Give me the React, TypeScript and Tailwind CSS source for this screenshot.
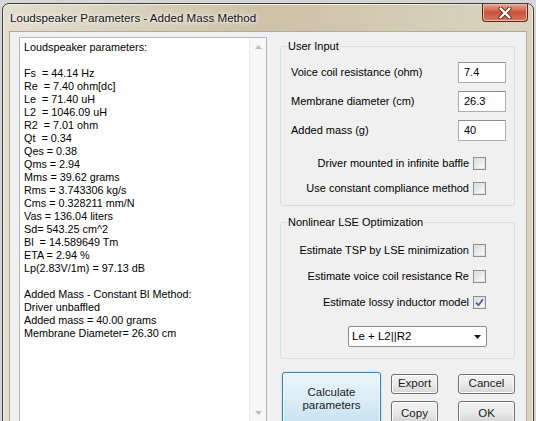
import React from "react";

const reportLines = [
  "Loudspeaker parameters:",
  "",
  "Fs  = 44.14 Hz",
  "Re  = 7.40 ohm[dc]",
  "Le  = 71.40 uH",
  "L2  = 1046.09 uH",
  "R2  = 7.01 ohm",
  "Qt  = 0.34",
  "Qes = 0.38",
  "Qms = 2.94",
  "Mms = 39.62 grams",
  "Rms = 3.743306 kg/s",
  "Cms = 0.328211 mm/N",
  "Vas = 136.04 liters",
  "Sd= 543.25 cm^2",
  "Bl  = 14.589649 Tm",
  "ETA = 2.94 %",
  "Lp(2.83V/1m) = 97.13 dB",
  "",
  "Added Mass - Constant Bl Method:",
  "Driver unbaffled",
  "Added mass = 40.00 grams",
  "Membrane Diameter= 26.30 cm",
];

function CheckBox({ checked }: { checked?: boolean }) {
  return (
    <span className="w-[13px] h-[13px] shrink-0 border border-[#8e8f8f] bg-white flex items-center justify-center">
      <span className="w-[11px] h-[11px] border border-[#e2e2e2] bg-gradient-to-br from-[#dcdcdc] to-[#fbfbfb] flex items-center justify-center">
        {checked && (
          <svg width="9" height="9" viewBox="0 0 9 9">
            <path d="M1 4.5 L3.5 7.2 L8 1.2" fill="none" stroke="#4a5f97" strokeWidth="1.8" />
          </svg>
        )}
      </span>
    </span>
  );
}

function CheckRow({ label, checked }: { label: string; checked?: boolean }) {
  return (
    <div className="flex items-center justify-end gap-[4px] pr-[28px] h-[13px]">
      <span className="leading-[13px]">{label}</span>
      <CheckBox checked={checked} />
    </div>
  );
}

function InputRow({ label, value }: { label: string; value: string }) {
  return (
    <div className="flex items-center justify-between pl-[10px] pr-[8px] h-[21px]">
      <span>{label}</span>
      <div className="w-[48px] h-[21px] border border-[#abadb3] border-t-[#8c8f96] bg-white flex items-center pl-[5px]">
        {value}
      </div>
    </div>
  );
}

function Button({ label, className }: { label: React.ReactNode; className: string }) {
  return (
    <div
      className={
        "border border-[#707070] rounded-[3px] bg-gradient-to-b from-[#f2f2f2] via-[#ebebeb] to-[#d4d4d4] shadow-[inset_0_0_0_1px_#fbfbfb] flex items-center justify-center text-[11.5px] text-[#1a1a1a] " +
        className
      }
    >
      {label}
    </div>
  );
}

export default function App() {
  return (
    <div className="w-[536px] h-[421px] overflow-hidden bg-[#d6d6d6] [font-family:'Liberation_Sans',Arial,sans-serif]">
      <div className="mt-[3px] ml-[2px] w-[532px] h-[440px] border border-[#3f3d38] rounded-t-[7px] bg-gradient-to-r from-[#e4ded0] via-[#cdc2a7] to-[#dcd4c1] shadow-[inset_0_0_0_1px_#f3efe4] flex flex-col px-[6px]">
        {/* caption bar */}
        <div className="h-[27px] flex items-start justify-between shrink-0">
          <span className="pl-[1px] mt-[7px] text-[11.6px] leading-[14px] text-[#111] [text-shadow:0_0_6px_#fff,0_0_3px_#fff]">
            Loudspeaker Parameters - Added Mass Method
          </span>
          <div className="mr-[-1px] w-[46px] h-[18px] rounded-b-[4px] border border-t-0 border-[#5b2519] bg-gradient-to-b from-[#e9a897] via-[#c8533b] to-[#d2785f] shadow-[inset_0_0_0_1px_#efb9a9] flex items-center justify-center">
            <svg width="14" height="12" viewBox="0 0 14 12">
              <path d="M2.5 1.5 L11.5 10.5 M11.5 1.5 L2.5 10.5" stroke="#5a1e12" strokeWidth="4" strokeLinecap="round" />
              <path d="M2.5 1.5 L11.5 10.5 M11.5 1.5 L2.5 10.5" stroke="#ffffff" strokeWidth="2.4" strokeLinecap="round" />
            </svg>
          </div>
        </div>

        {/* client area */}
        <div className="flex-1 border border-[#b3ab98] bg-[#f0f0f0] flex items-start pl-[9px] text-black">
          {/* report text box */}
          <div className="mt-[5px] w-[248px] h-[385px] border border-[#b5b8bd] bg-white flex text-[10.8px] leading-[13px]">
            <div className="flex-1 pl-[4px] pt-[3px] whitespace-pre">
              {reportLines.map((l, i) => (
                <div key={i} className="h-[13px]">
                  {l}
                </div>
              ))}
            </div>
            <div className="w-[17px] bg-[#f7f7f7] border-l border-[#ececec] flex flex-col justify-between items-center">
              <div className="h-[17px] flex items-center justify-center">
                <svg width="7" height="4" viewBox="0 0 7 4">
                  <path d="M0 4 L3.5 0 L7 4 Z" fill="#bdbdbd" />
                </svg>
              </div>
              <div className="h-[17px] flex items-center justify-center">
                <svg width="7" height="4" viewBox="0 0 7 4">
                  <path d="M0 0 L3.5 4 L7 0 Z" fill="#bdbdbd" />
                </svg>
              </div>
            </div>
          </div>

          {/* settings column */}
          <div className="ml-[13px] mt-[8px] w-[235px] flex flex-col text-[11px]">
            <fieldset className="border border-[#d5dfe5] rounded-[3px] pb-[10px]">
              <legend className="ml-[6px] px-[1px] leading-[13px]">User Input</legend>
              <div className="mt-[9px] flex flex-col gap-[8px]">
                <InputRow label="Voice coil resistance (ohm)" value="7.4" />
                <InputRow label="Membrane diameter (cm)" value="26.3" />
                <InputRow label="Added mass (g)" value="40" />
              </div>
              <div className="mt-[16px] flex flex-col gap-[12px]">
                <CheckRow label="Driver mounted in infinite baffle" />
                <CheckRow label="Use constant compliance method" />
              </div>
            </fieldset>

            <fieldset className="mt-[10px] border border-[#d5dfe5] rounded-[3px] pb-[11px]">
              <legend className="ml-[6px] px-[1px] leading-[13px]">Nonlinear LSE Optimization</legend>
              <div className="mt-[15px] flex flex-col gap-[13px]">
                <CheckRow label="Estimate TSP by LSE minimization" />
                <CheckRow label="Estimate voice coil resistance Re" />
                <CheckRow label="Estimate lossy inductor model" checked />
              </div>
              <div className="mt-[17px] pl-[67px]">
                <div className="w-[139px] h-[21px] border border-[#8d8d8d] rounded-[2px] bg-white flex items-center justify-between pl-[3px] pr-[5px] text-[11.5px]">
                  <span>Le + L2||R2</span>
                  <svg width="7" height="4" viewBox="0 0 7 4">
                    <path d="M0 0 L3.5 4 L7 0 Z" fill="#1b1b1b" />
                  </svg>
                </div>
              </div>
            </fieldset>

            <div className="mt-[13px] flex items-start">
              <div className="ml-[2px] w-[99px] h-[52px] rounded-[3px] border border-[#3c7fb1] bg-gradient-to-b from-[#e9f4fa] via-[#dcedf6] to-[#c9e3f1] shadow-[inset_0_0_0_1px_#f4fbff,0_0_2px_#9fd0ee] flex flex-col items-center pt-[13px] text-[11.5px] leading-[13px] text-[#1a1a1a]">
                <span>Calculate</span>
                <span>parameters</span>
              </div>
              <div className="ml-[10px] mt-[2px] flex flex-col gap-[7px]">
                <Button label="Export" className="w-[47px] h-[20px]" />
                <Button label="Copy" className="w-[47px] h-[22px] pt-[3px]" />
              </div>
              <div className="ml-[20px] mt-[2px] flex flex-col gap-[7px]">
                <Button label="Cancel" className="w-[57px] h-[20px]" />
                <Button label="OK" className="w-[57px] h-[22px] pt-[3px]" />
              </div>
            </div>
          </div>
        </div>
      </div>
    </div>
  );
}
